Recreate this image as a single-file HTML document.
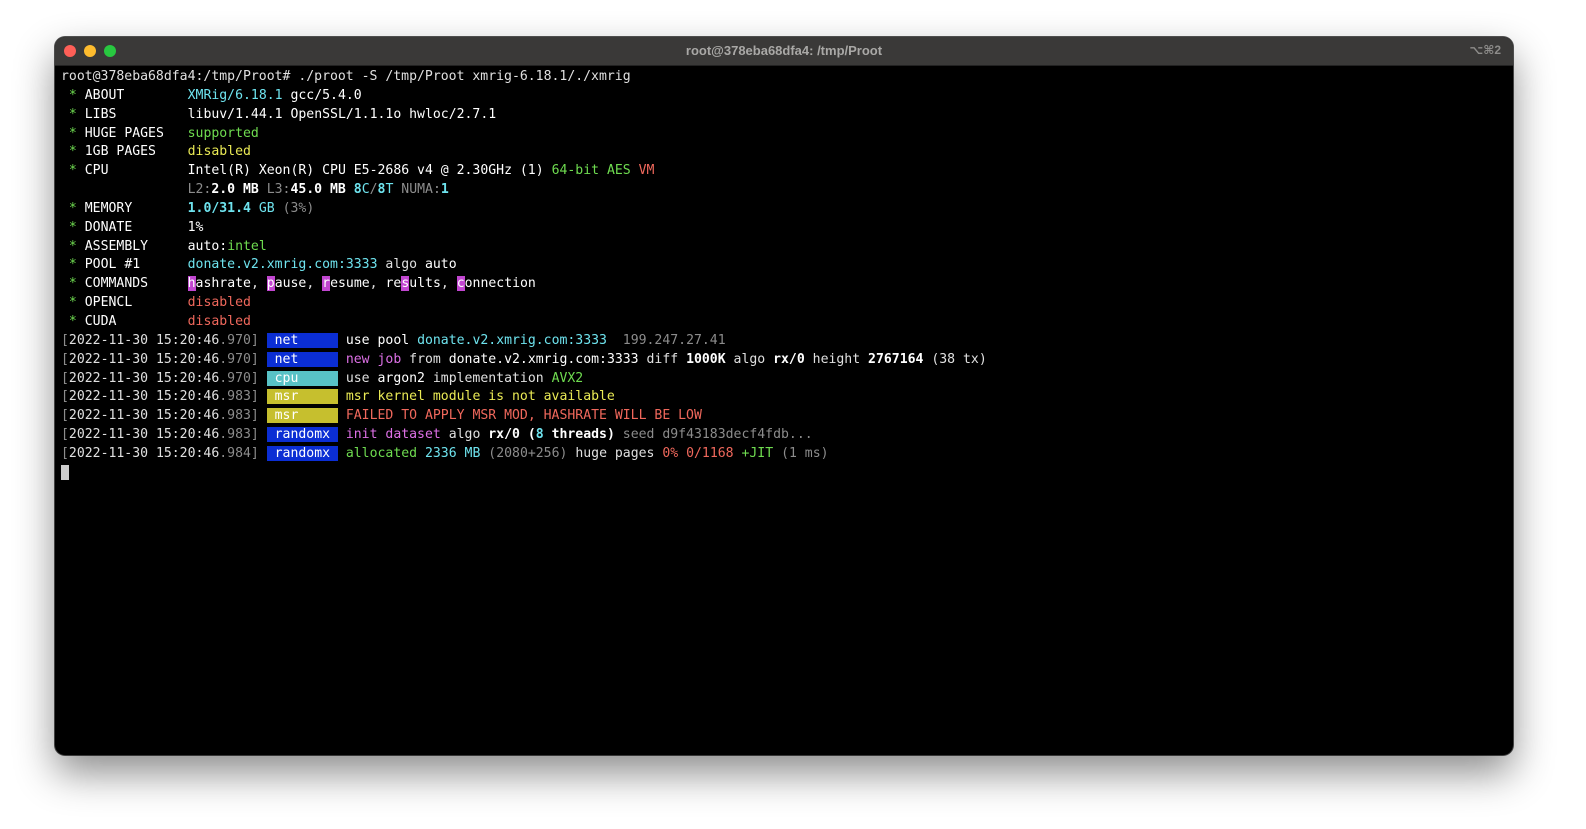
<!DOCTYPE html>
<html><head><meta charset="utf-8">
<style>
html,body{margin:0;padding:0;background:#fff;width:1586px;height:829px;overflow:hidden}
.win{position:absolute;left:55px;top:37px;width:1458px;height:718px;background:#000;border-radius:10px;box-shadow:0 18px 40px rgba(0,0,0,.45),0 0 0 1px #555;overflow:hidden}
.tb{position:absolute;left:0;top:0;right:0;height:28px;background:#3a3938;border-bottom:1px solid #222}
.tb .t{position:absolute;left:0;right:0;top:6px;text-align:center;color:#a9a8a6;font:bold 13px "Liberation Sans",sans-serif}
.tb .k{position:absolute;right:12px;top:6px;color:#8d8c8a;font:bold 12px "Liberation Sans","DejaVu Sans",sans-serif}
.d{position:absolute;top:8px;width:12px;height:12px;border-radius:50%}
pre{position:absolute;left:6px;top:31px;margin:0;font:13.15px "DejaVu Sans Mono","Liberation Mono",monospace;line-height:18.85px;color:#e0e0e0}
.g{color:#6fdc50}.c{color:#6ee3ee}.y{color:#eaea55}.r{color:#f0685c}.m{color:#dd70e6}.s{color:#8c8c8c}.w{color:#fff}.b{font-weight:bold}
.hm{background:#c146d0;color:#fff}
.tn{background:#0b2ed4;color:#fff}
.tc{background:#58c2c6;color:#fff}
.ty{background:#c6bf2e;color:#fff}
.cur{background:#ccc}
</style></head><body>
<div class="win">
<div class="tb"><div class="d" style="left:9px;background:#fe5f57"></div><div class="d" style="left:29px;background:#febc2e"></div><div class="d" style="left:49px;background:#28c840"></div>
<div class="t">root@378eba68dfa4: /tmp/Proot</div><div class="k">⌥⌘2</div></div>
<pre>root@378eba68dfa4:/tmp/Proot# ./proot -S /tmp/Proot xmrig-6.18.1/./xmrig
 <span class="g">*</span> <span class="w">ABOUT</span>        <span class="c">XMRig/6.18.1</span> <span class="w">gcc/5.4.0</span>
 <span class="g">*</span> <span class="w">LIBS</span>         <span class="w">libuv/1.44.1 OpenSSL/1.1.1o hwloc/2.7.1</span>
 <span class="g">*</span> <span class="w">HUGE PAGES</span>   <span class="g">supported</span>
 <span class="g">*</span> <span class="w">1GB PAGES</span>    <span class="y">disabled</span>
 <span class="g">*</span> <span class="w">CPU</span>          <span class="w">Intel(R) Xeon(R) CPU E5-2686 v4 @ 2.30GHz (1)</span> <span class="g">64-bit AES</span> <span class="r">VM</span>
                <span class="s">L2:</span><span class="w b">2.0 MB</span> <span class="s">L3:</span><span class="w b">45.0 MB</span> <span class="c b">8</span><span class="c">C</span><span class="s">/</span><span class="c b">8</span><span class="c">T</span> <span class="s">NUMA:</span><span class="c b">1</span>
 <span class="g">*</span> <span class="w">MEMORY</span>       <span class="c b">1.0/31.4</span> <span class="c">GB</span> <span class="s">(3%)</span>
 <span class="g">*</span> <span class="w">DONATE</span>       <span class="w">1%</span>
 <span class="g">*</span> <span class="w">ASSEMBLY</span>     <span class="w">auto:</span><span class="g">intel</span>
 <span class="g">*</span> <span class="w">POOL #1</span>      <span class="c">donate.v2.xmrig.com:3333</span> algo <span class="w">auto</span>
 <span class="g">*</span> <span class="w">COMMANDS</span>     <span class="hm">h</span><span class="w">ashrate</span>, <span class="hm">p</span><span class="w">ause</span>, <span class="hm">r</span><span class="w">esume</span>, <span class="w">re</span><span class="hm">s</span><span class="w">ults</span>, <span class="hm">c</span><span class="w">onnection</span>
 <span class="g">*</span> <span class="w">OPENCL</span>       <span class="r">disabled</span>
 <span class="g">*</span> <span class="w">CUDA</span>         <span class="r">disabled</span>
<span class="s">[</span>2022-11-30 15:20:46<span class="s">.970]</span> <span class="tn"> net     </span> <span class="w">use pool</span> <span class="c">donate.v2.xmrig.com:3333</span>  <span class="s">199.247.27.41</span>
<span class="s">[</span>2022-11-30 15:20:46<span class="s">.970]</span> <span class="tn"> net     </span> <span class="m">new job</span> from <span class="w">donate.v2.xmrig.com:3333</span> diff <span class="w b">1000K</span> algo <span class="w b">rx/0</span> height <span class="w b">2767164</span> (38 tx)
<span class="s">[</span>2022-11-30 15:20:46<span class="s">.970]</span> <span class="tc"> cpu     </span> use <span class="w">argon2</span> implementation <span class="g">AVX2</span>
<span class="s">[</span>2022-11-30 15:20:46<span class="s">.983]</span> <span class="ty"> msr     </span> <span class="y">msr kernel module is not available</span>
<span class="s">[</span>2022-11-30 15:20:46<span class="s">.983]</span> <span class="ty"> msr     </span> <span class="r">FAILED TO APPLY MSR MOD, HASHRATE WILL BE LOW</span>
<span class="s">[</span>2022-11-30 15:20:46<span class="s">.983]</span> <span class="tn"> randomx </span> <span class="m">init dataset</span> algo <span class="w b">rx/0 (</span><span class="c b">8</span><span class="w b"> threads)</span> <span class="s">seed d9f43183decf4fdb...</span>
<span class="s">[</span>2022-11-30 15:20:46<span class="s">.984]</span> <span class="tn"> randomx </span> <span class="g">allocated</span> <span class="c">2336 MB</span> <span class="s">(2080+256)</span> huge pages <span class="r">0% 0/1168</span> <span class="g">+JIT</span> <span class="s">(1 ms)</span>
<span class="cur"> </span></pre>
</div>
</body></html>
